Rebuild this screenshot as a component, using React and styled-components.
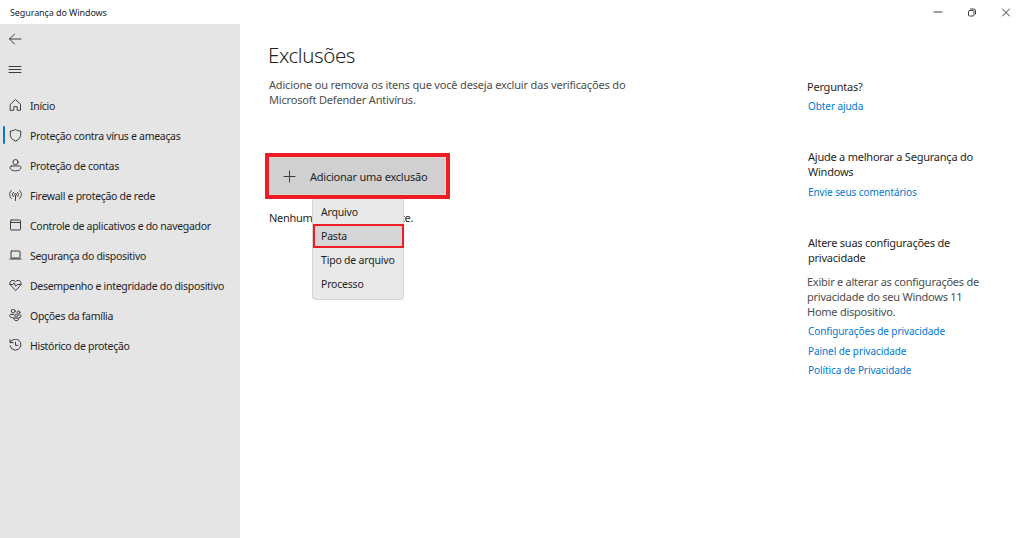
import React from 'react'
import styled, { createGlobalStyle } from 'styled-components';

const GlobalStyle = createGlobalStyle`
* {
box-sizing: border-box;
}
body {
margin: 0;
background: #fff;
font-family: "Segoe UI", "Noto Sans", sans-serif;
color: #1f1f1f;
}
p, h1, h2 {
margin: 0;
font-weight: 400;
}
`;
const Window = styled.div`
width: 1024px;
height: 538px;
display: flex;
flex-direction: column;
overflow: hidden;
`;
const TitleBar = styled.header`
height: 24px;
display: flex;
align-items: center;
justify-content: space-between;
padding: 1px 13px 0 10px;
`;
const WindowTitle = styled.span`
font-size: 9px;
letter-spacing: -0.1px;
white-space: nowrap;
`;
const WindowButtons = styled.div`
display: flex;
gap: 24px;
`;
const Body = styled.div`
flex: 1;
display: flex;
`;
const Sidebar = styled.nav`
width: 240px;
background: #e5e5e5;
`;
const IconButton = styled.button`
display: flex;
align-items: center;
width: 100%;
height: 30px;
padding: 0 0 0 8px;
border: 0;
background: none;
`;
const NavList = styled.div`
padding-top: 6px;
`;
const NavItem = styled.a`
display: flex;
align-items: center;
height: 30px;
padding-left: 3px;
`;
const Marker = styled.span`
width: 2px;
height: 18px;
margin-right: 3px;
border-radius: 1px;
background: ${props => props.$active ? '#0f75c4' : 'transparent'};
`;
const NavText = styled.span`
margin-left: 8px;
padding-top: 1px;
font-size: 10.5px;
letter-spacing: -0.3px;
white-space: nowrap;
`;
const Icon = styled.svg`
flex: none;
fill: none;
stroke: #3c3c3c;
stroke-width: 1;
stroke-linecap: round;
stroke-linejoin: round;
`;
const Main = styled.main`
flex: 1;
padding: 17px 0 0 28px;
`;
const Title = styled.h1`
font-size: 20.5px;
font-weight: 300;
line-height: 28px;
letter-spacing: -0.4px;
`;
const Desc = styled.p`
width: 380px;
margin-top: 8px;
padding-left: 1px;
font-size: 11px;
line-height: 15px;
color: #4d4d4d;
white-space: nowrap;
letter-spacing: -0.17px;
`;
const AddArea = styled.div`
position: relative;
margin: 46px 0 0 -3px;
`;
const AddButton = styled.button`
display: flex;
align-items: center;
width: 185px;
height: 46px;
padding: 0 0 0 14px;
border: 4px solid #ee1c25;
background: #d0d0d0;
font-family: inherit;
font-size: 11px;
letter-spacing: -0.23px;
color: #1f1f1f;
box-shadow: inset 0 0 0 1px #e2d4d4;
`;
const AddText = styled.span`
margin-left: 14px;
padding-top: 1px;
white-space: nowrap;
`;
const Empty = styled.p`
margin: 11px 0 0 4px;
font-size: 11px;
line-height: 16px;
letter-spacing: -0.28px;
`;
const Menu = styled.div`
position: absolute;
left: 47px;
top: 46px;
width: 92px;
height: 101px;
padding-top: 1px;
border: 1px solid #d4d4d4;
border-top: 0;
border-radius: 0 0 4px 4px;
background: #e9e9e9;
`;
const MenuItem = styled.div`
display: flex;
align-items: center;
height: 24px;
margin-right: ${props => props.$marked ? -1 : 0}px;
padding-left: ${props => props.$marked ? 6 : 8}px;
border: ${props => props.$marked ? '2px solid #ee1c25' : '0'};
background: ${props => props.$marked ? '#d6d6d6' : 'none'};
font-size: 10.5px;
letter-spacing: -0.2px;
white-space: nowrap;
`;
const Aside = styled.aside`
width: 217px;
padding-top: 55px;
`;
const Group = styled.section`
margin-bottom: ${props => props.$gap || 0}px;
`;
const GroupTitle = styled.h2`
padding-left: ${props => props.$indent || 0}px;
margin-bottom: ${props => props.$space || 0}px;
font-size: 11px;
line-height: 15px;
letter-spacing: -0.23px;
white-space: nowrap;
`;
const GroupText = styled.p`
margin: 9px 0 2px;
font-size: 11px;
line-height: 15px;
letter-spacing: -0.25px;
color: #4d4d4d;
white-space: nowrap;
`;
const Link = styled.a`
display: block;
padding: 2px 0 0 1px;
font-size: 10px;
line-height: 17.5px;
letter-spacing: -0.08px;
color: #0078d4;
white-space: nowrap;
`;

const glyphs = {
    home: <path d="M1.500 5.700 6.500 1l5 4.700v6.100H8.200V8.200H4.800v3.600H1.500z" />,
    shield: <path d="M6.500.8C8 2 9.600 2.400 11.700 2.500v3.800c0 3-2 5-5.200 6.200C3.300 11.300 1.300 9.300 1.300 6.300V2.500C3.400 2.400 5 2 6.500.8z" />,
    account: <><circle cx="6.500" cy="3.600" r="2.600" /><path d="M2.500 7.500h8c1 0 1.500.7 1.500 1.500 0 2.200-2.300 3.300-5.500 3.300S1 11.200 1 9c0-.8.5-1.500 1.500-1.500z" /></>,
    network: <><circle cx="6.500" cy="6" r="1" /><path d="M6.500 7v5M4.400 3.800c-1.200 1.200-1.200 3.200 0 4.400M8.600 3.800c1.200 1.200 1.200 3.200 0 4.400M2.300 2C0 4.200 0 7.800 2.300 10M10.700 2c2.300 2.200 2.300 5.800 0 8" /></>,
    app: <><rect x="1.500" y="1.500" width="10" height="10" rx="1" /><path d="M1.500 4h10" /></>,
    device: <><rect x="2" y="2.500" width="9" height="7" rx=".5" /><path d="M.8 10.500h11.400" /></>,
    health: <><path d="M6.500 11.800 1.700 7C-.8 4 3-.3 6.500 3.100 10-.3 13.800 4 11.300 7z" /><path d="M.8 6h3l1.200-1.600 1.700 3.400L8.200 6h4" /></>,
    family: <><circle cx="4.200" cy="2.600" r="1.900" /><circle cx="9.500" cy="3.800" r="1.400" /><circle cx="7.200" cy="7.100" r="1.400" /><path d="M4.500 6H1.600C.2 6-.1 9 3.500 9.300M9.800 6.500h1.600c1.400 0 1.300 2.600-1.300 2.800M4.800 9.600h4.900c.5 3.500-5.400 3.500-4.900 0z" /></>,
    history: <><path d="M1 1v3.200h3.200M1.300 4A5.500 5.500 0 1 1 1 7.200M6.500 3.700v3.200H9" /></>,
};

const items = [
    { icon: 'home', text: 'Início' },
    { icon: 'shield', text: 'Proteção contra vírus e ameaças', active: true },
    { icon: 'account', text: 'Proteção de contas' },
    { icon: 'network', text: 'Firewall e proteção de rede' },
    { icon: 'app', text: 'Controle de aplicativos e do navegador' },
    { icon: 'device', text: 'Segurança do dispositivo' },
    { icon: 'health', text: 'Desempenho e integridade do dispositivo' },
    { icon: 'family', text: 'Opções da família' },
    { icon: 'history', text: 'Histórico de proteção' },
];

const App = () => {
    return (
        <Window>
            <GlobalStyle />
            <TitleBar>
                <WindowTitle>Segurança do Windows</WindowTitle>
                <WindowButtons>
                    <Icon width="10" height="10"><path d="M1 4h8" /></Icon>
                    <Icon width="10" height="10"><rect x="1.500" y="2.500" width="5.500" height="5.500" rx="1" /><path d="M3.500 1h3q2 0 2 2v3" /></Icon>
                    <Icon width="10" height="10"><path d="M1.500 1l7 7M8.500 1l-7 7" /></Icon>
                </WindowButtons>
            </TitleBar>
            <Body>
                <Sidebar>
                    <IconButton>
                        <Icon width="14" height="14"><path d="M1.500 7h11.500M6.500 2l-5 5 5 5" /></Icon>
                    </IconButton>
                    <IconButton>
                        <Icon width="14" height="14"><path d="M1 4.500h12M1 7.500h12M1 10.500h12" /></Icon>
                    </IconButton>
                    <NavList>
                        {items.map(item => (
                            <NavItem key={item.icon}>
                                <Marker $active={item.active} />
                                <Icon width="14" height="13" viewBox="-1 0.5 14 13">{glyphs[item.icon]}</Icon>
                                <NavText>{item.text}</NavText>
                            </NavItem>
                        ))}
                    </NavList>
                </Sidebar>
                <Main>
                    <Title>Exclusões</Title>
                    <Desc>
                        Adicione ou remova os itens que você deseja excluir das verificações do
                        <br />
                        Microsoft Defender Antivírus.
                    </Desc>
                    <AddArea>
                        <AddButton>
                            <Icon width="13" height="13"><path d="M6.500 1v11M1 6.500h11" /></Icon>
                            <AddText>Adicionar uma exclusão</AddText>
                        </AddButton>
                        <Empty>Nenhuma exclusão existente.</Empty>
                        <Menu>
                            <MenuItem>Arquivo</MenuItem>
                            <MenuItem $marked>Pasta</MenuItem>
                            <MenuItem>Tipo de arquivo</MenuItem>
                            <MenuItem>Processo</MenuItem>
                        </Menu>
                    </AddArea>
                </Main>
                <Aside>
                    <Group $gap={33}>
                        <GroupTitle $space={2}>Perguntas?</GroupTitle>
                        <Link>Obter ajuda</Link>
                    </Group>
                    <Group $gap={34}>
                        <GroupTitle $indent={1} $space={3}>Ajude a melhorar a Segurança do<br />Windows</GroupTitle>
                        <Link>Envie seus comentários</Link>
                    </Group>
                    <Group>
                        <GroupTitle $indent={1}>Altere suas configurações de<br />privacidade</GroupTitle>
                        <GroupText>Exibir e alterar as configurações de<br />privacidade do seu Windows 11<br />Home dispositivo.</GroupText>
                        <Link>Configurações de privacidade</Link>
                        <Link>Painel de privacidade</Link>
                        <Link>Política de Privacidade</Link>
                    </Group>
                </Aside>
            </Body>
        </Window>
    )
}

export default App
